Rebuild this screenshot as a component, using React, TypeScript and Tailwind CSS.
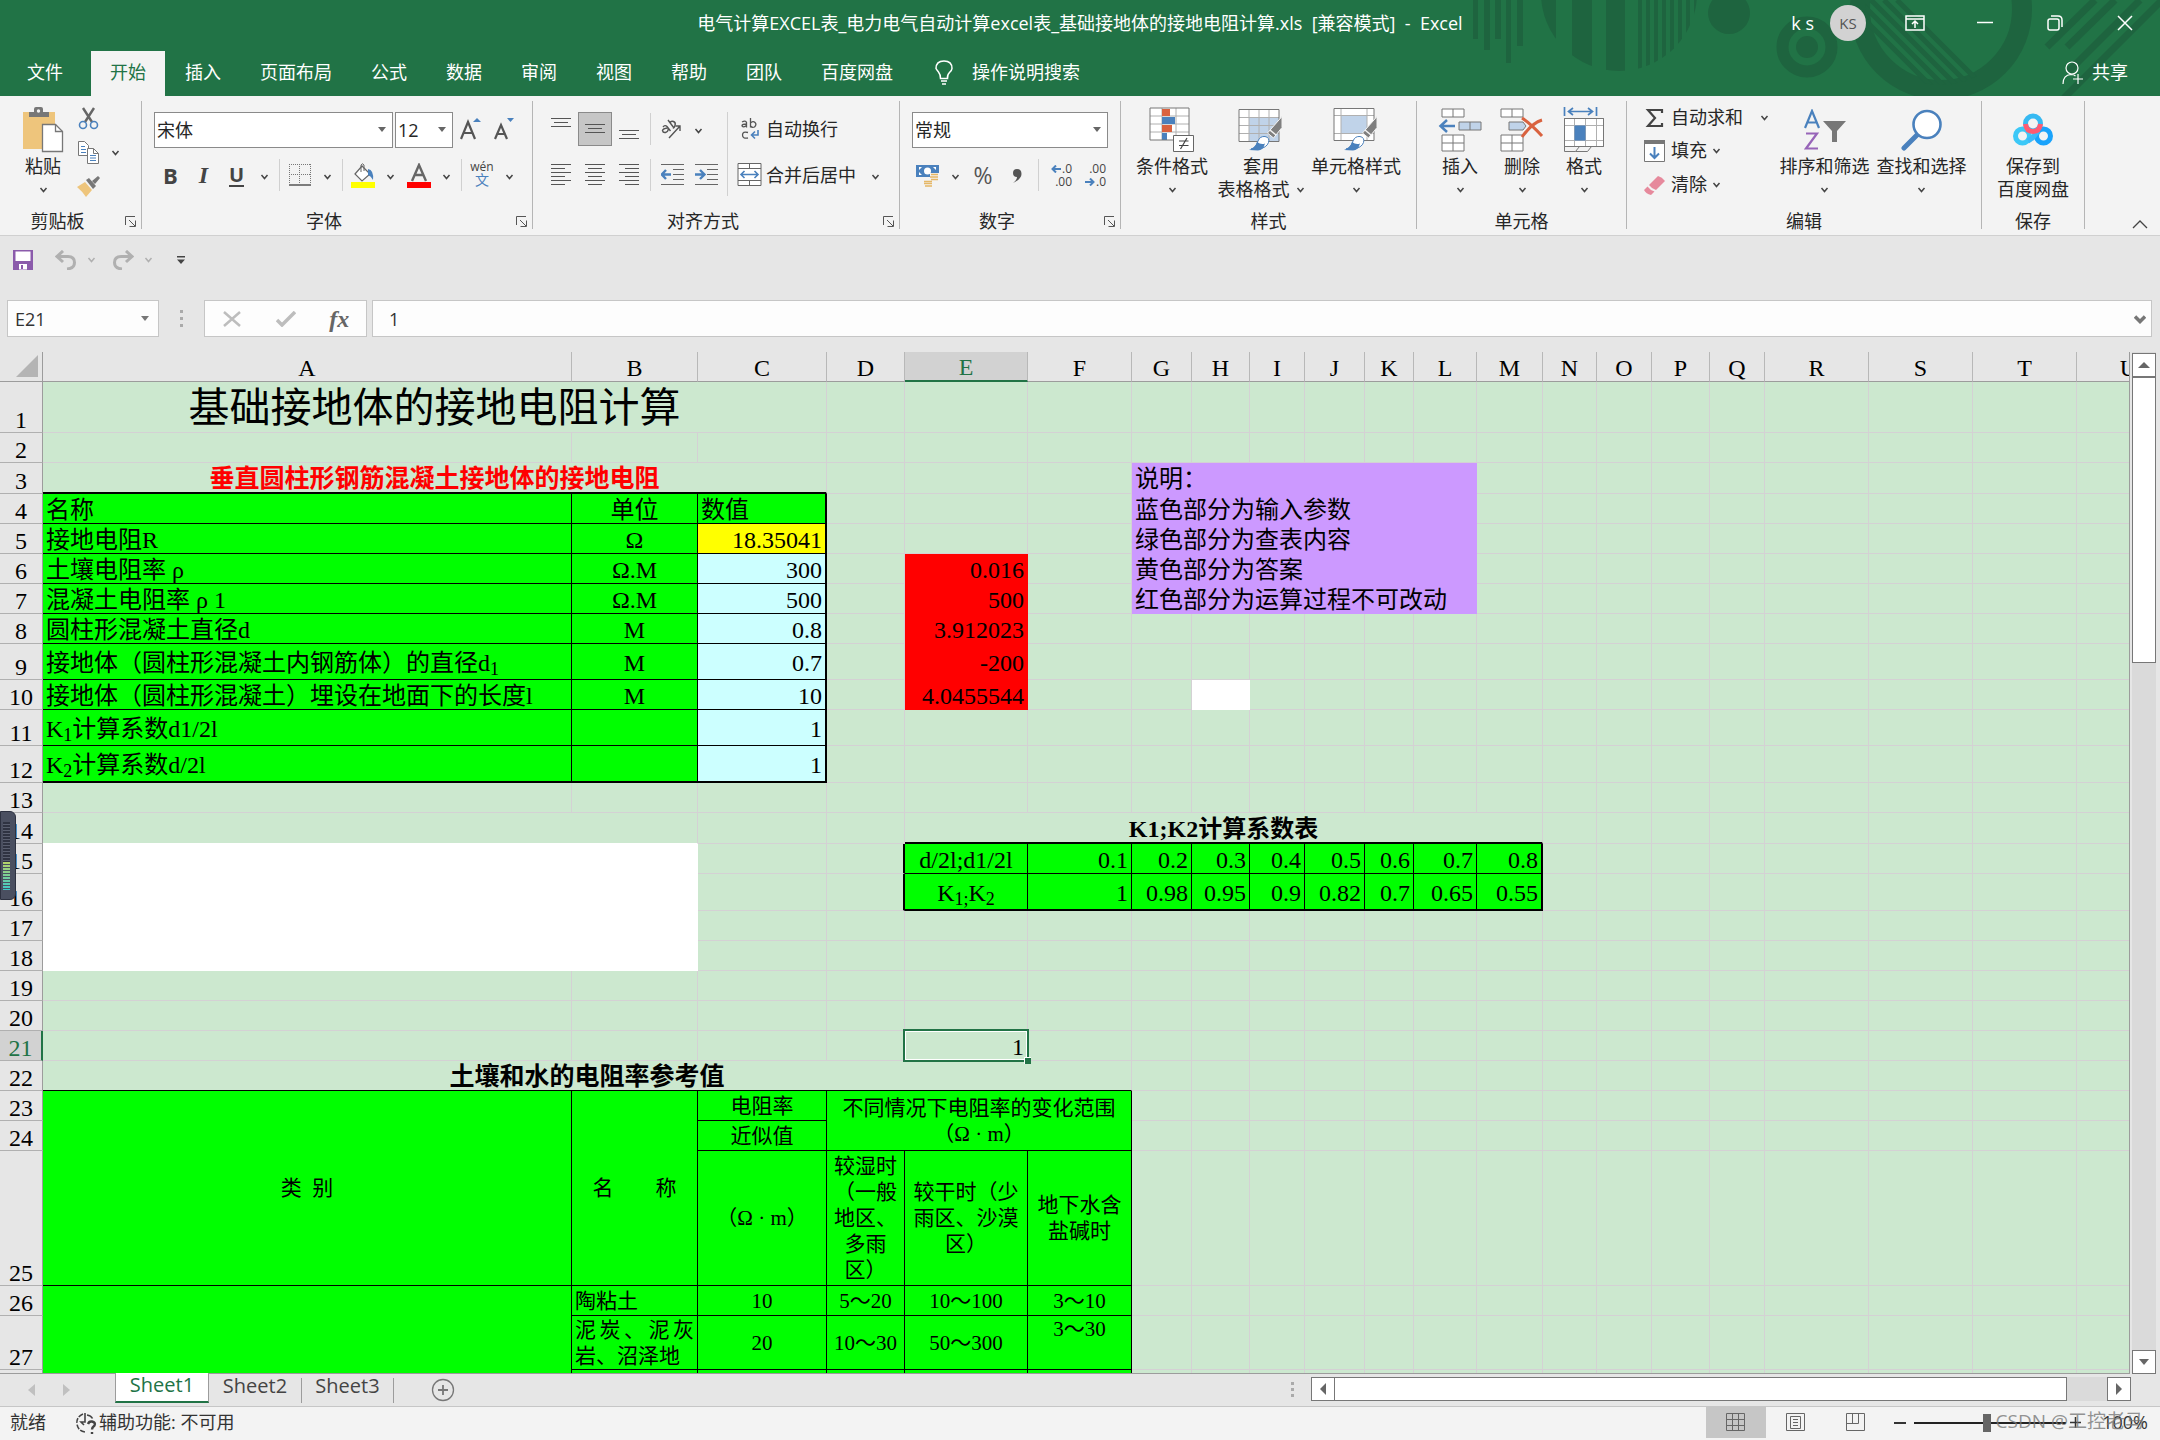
import { useState } from "react";
import type { ReactNode } from "react";

type Cell = {
  v?: ReactNode;
  cls?: string;
  colSpan?: number;
  rowSpan?: number;
};

type Row = {
  n: number;
  h: string;
  cells?: Record<string, Cell>;
};

const COLUMNS = [
  { id: "A", w: "w-[529px]" },
  { id: "B", w: "w-[126px]" },
  { id: "C", w: "w-[129px]" },
  { id: "D", w: "w-[78px]" },
  { id: "E", w: "w-[123px]" },
  { id: "F", w: "w-[104px]" },
  { id: "G", w: "w-[60px]" },
  { id: "H", w: "w-[58px]" },
  { id: "I", w: "w-[55px]" },
  { id: "J", w: "w-[60px]" },
  { id: "K", w: "w-[49px]" },
  { id: "L", w: "w-[63px]" },
  { id: "M", w: "w-[66px]" },
  { id: "N", w: "w-[54px]" },
  { id: "O", w: "w-[55px]" },
  { id: "P", w: "w-[58px]" },
  { id: "Q", w: "w-[55px]" },
  { id: "R", w: "w-[104px]" },
  { id: "S", w: "w-[104px]" },
  { id: "T", w: "w-[104px]" },
  { id: "U", w: "w-[104px]" },
];

const PLAIN = "border-[#d4d1d4]";
const GREEN = "bg-[#00ff00] border-black";
const GREEN_C = "bg-[#00ff00] border-black text-center";
const GREEN_R = "bg-[#00ff00] border-black text-right";
const BLUE = "bg-[#ccffff] border-black border-r-2 text-right";
const RED = "bg-[#ff0000] border-[#ff0000] text-right";
const PURPLE = "bg-[#cc99ff] border-[#cc99ff]";
const WHITE = "bg-white border-white";
const SOIL = "bg-[#00ff00] border-black text-center text-[21px] leading-[26px] whitespace-pre-line";

const note = (v: string): Cell => ({ v, cls: PURPLE, colSpan: 6 });

const ROWS: Row[] = [
  {
    n: 1,
    h: "h-[51px]",
    cells: {
      A: { v: "基础接地体的接地电阻计算", colSpan: 3, cls: `${PLAIN} text-center text-[41px] leading-[48px]` },
    },
  },
  { n: 2, h: "h-[30px]" },
  {
    n: 3,
    h: "h-[31px]",
    cells: {
      A: {
        v: "垂直圆柱形钢筋混凝土接地体的接地电阻",
        colSpan: 3,
        cls: "border-r-[#d4d1d4] border-b-2 border-b-black text-center font-bold text-[25px] text-[#ff0000]",
      },
      G: note("说明："),
    },
  },
  {
    n: 4,
    h: "h-[30px]",
    cells: {
      A: { v: "名称", cls: GREEN },
      B: { v: "单位", cls: GREEN_C },
      C: { v: "数值", cls: `${GREEN} border-r-2` },
      G: note("蓝色部分为输入参数"),
    },
  },
  {
    n: 5,
    h: "h-[30px]",
    cells: {
      A: { v: "接地电阻R", cls: GREEN },
      B: { v: "Ω", cls: GREEN_C },
      C: { v: "18.35041", cls: "bg-[#ffff00] border-black border-r-2 text-right" },
      G: note("绿色部分为查表内容"),
    },
  },
  {
    n: 6,
    h: "h-[30px]",
    cells: {
      A: { v: "土壤电阻率 ρ", cls: GREEN },
      B: { v: "Ω.M", cls: GREEN_C },
      C: { v: "300", cls: BLUE },
      E: { v: "0.016", cls: RED },
      G: note("黄色部分为答案"),
    },
  },
  {
    n: 7,
    h: "h-[30px]",
    cells: {
      A: { v: "混凝土电阻率 ρ 1", cls: GREEN },
      B: { v: "Ω.M", cls: GREEN_C },
      C: { v: "500", cls: BLUE },
      E: { v: "500", cls: RED },
      G: note("红色部分为运算过程不可改动"),
    },
  },
  {
    n: 8,
    h: "h-[30px]",
    cells: {
      A: { v: "圆柱形混凝土直径d", cls: GREEN },
      B: { v: "M", cls: GREEN_C },
      C: { v: "0.8", cls: BLUE },
      E: { v: "3.912023", cls: RED },
    },
  },
  {
    n: 9,
    h: "h-[36px]",
    cells: {
      A: { v: <>接地体（圆柱形混凝土内钢筋体）的直径d<sub>1</sub></>, cls: GREEN },
      B: { v: "M", cls: GREEN_C },
      C: { v: "0.7", cls: BLUE },
      E: { v: "-200", cls: RED },
    },
  },
  {
    n: 10,
    h: "h-[30px]",
    cells: {
      A: { v: "接地体（圆柱形混凝土）埋设在地面下的长度l", cls: GREEN },
      B: { v: "M", cls: GREEN_C },
      C: { v: "10", cls: BLUE },
      E: { v: "4.0455544", cls: RED },
      H: { cls: WHITE },
    },
  },
  {
    n: 11,
    h: "h-[36px]",
    cells: {
      A: { v: <>K<sub>1</sub>计算系数d1/2l</>, cls: GREEN },
      B: { cls: GREEN },
      C: { v: "1", cls: BLUE },
    },
  },
  {
    n: 12,
    h: "h-[37px]",
    cells: {
      A: { v: <>K<sub>2</sub>计算系数d/2l</>, cls: `${GREEN} border-b-2` },
      B: { cls: `${GREEN} border-b-2` },
      C: { v: "1", cls: `${BLUE} border-b-2` },
    },
  },
  { n: 13, h: "h-[30px]" },
  {
    n: 14,
    h: "h-[31px]",
    cells: {
      A: { colSpan: 2, cls: "border-r-[#d4d1d4] border-b-white" },
      E: {
        v: "K1;K2计算系数表",
        colSpan: 9,
        cls: "border-r-[#d4d1d4] border-b-2 border-b-black text-center font-bold",
      },
    },
  },
  {
    n: 15,
    h: "h-[30px]",
    cells: {
      A: { colSpan: 2, rowSpan: 4, cls: WHITE },
      D: { cls: "border-b-[#d4d1d4] border-r-2 border-r-black" },
      E: { v: "d/2l;d1/2l", cls: GREEN_C },
      F: { v: "0.1", cls: GREEN_R },
      G: { v: "0.2", cls: GREEN_R },
      H: { v: "0.3", cls: GREEN_R },
      I: { v: "0.4", cls: GREEN_R },
      J: { v: "0.5", cls: GREEN_R },
      K: { v: "0.6", cls: GREEN_R },
      L: { v: "0.7", cls: GREEN_R },
      M: { v: "0.8", cls: `${GREEN_R} border-r-2` },
    },
  },
  {
    n: 16,
    h: "h-[37px]",
    cells: {
      D: { cls: "border-b-[#d4d1d4] border-r-2 border-r-black" },
      E: { v: <>K<sub>1;</sub>K<sub>2</sub></>, cls: `${GREEN_C} border-b-2` },
      F: { v: "1", cls: `${GREEN_R} border-b-2` },
      G: { v: "0.98", cls: `${GREEN_R} border-b-2` },
      H: { v: "0.95", cls: `${GREEN_R} border-b-2` },
      I: { v: "0.9", cls: `${GREEN_R} border-b-2` },
      J: { v: "0.82", cls: `${GREEN_R} border-b-2` },
      K: { v: "0.7", cls: `${GREEN_R} border-b-2` },
      L: { v: "0.65", cls: `${GREEN_R} border-b-2` },
      M: { v: "0.55", cls: `${GREEN_R} border-b-2 border-r-2` },
    },
  },
  { n: 17, h: "h-[30px]" },
  { n: 18, h: "h-[30px]" },
  { n: 19, h: "h-[30px]" },
  { n: 20, h: "h-[30px]" },
  {
    n: 21,
    h: "h-[30px]",
    cells: {
      E: {
        v: (
          <>
            1
            <span className="absolute -inset-[2px] border-2 border-[#217346] outline-1 -outline-offset-3 outline-white" />
            <span className="absolute -right-1 -bottom-1 size-[7px] border-t border-l border-white bg-[#217346]" />
          </>
        ),
        cls: `${PLAIN} relative text-right`,
      },
    },
  },
  {
    n: 22,
    h: "h-[30px]",
    cells: {
      A: {
        v: "土壤和水的电阻率参考值",
        colSpan: 6,
        cls: "border-r-[#d4d1d4] border-b-black text-center font-bold text-[25px]",
      },
    },
  },
  {
    n: 23,
    h: "h-[30px]",
    cells: {
      A: { v: "类\u00a0\u00a0别", rowSpan: 3, cls: SOIL },
      B: { v: "名　　称", rowSpan: 3, cls: SOIL },
      C: { v: "电阻率", cls: SOIL },
      D: { v: "不同情况下电阻率的变化范围\n（Ω · m）", colSpan: 3, rowSpan: 2, cls: SOIL },
    },
  },
  { n: 24, h: "h-[30px]", cells: { C: { v: "近似值", cls: SOIL } } },
  {
    n: 25,
    h: "h-[135px]",
    cells: {
      C: { v: "（Ω · m）", cls: SOIL },
      D: { v: "较湿时\n（一般\n地区、\n多雨\n区）", cls: SOIL },
      E: { v: "较干时（少\n雨区、沙漠\n区）", cls: SOIL },
      F: { v: "地下水含\n盐碱时", cls: SOIL },
    },
  },
  {
    n: 26,
    h: "h-[30px]",
    cells: {
      A: { rowSpan: 3, cls: GREEN },
      B: { v: "陶粘土", cls: "bg-[#00ff00] border-black text-[21px]" },
      C: { v: "10", cls: SOIL },
      D: { v: "5～20", cls: SOIL },
      E: { v: "10～100", cls: SOIL },
      F: { v: "3～10", cls: SOIL },
    },
  },
  {
    n: 27,
    h: "h-[54px]",
    cells: {
      B: { v: "泥炭、泥灰岩、沼泽地", cls: "bg-[#00ff00] border-black text-justify text-[21px] leading-[26px]" },
      C: { v: "20", cls: SOIL },
      D: { v: "10～30", cls: SOIL },
      E: { v: "50～300", cls: SOIL },
      F: { v: "3～30", cls: `${SOIL} align-top` },
    },
  },
  {
    n: 28,
    h: "h-[30px]",
    cells: { B: { cls: GREEN }, C: { cls: GREEN }, D: { cls: GREEN }, E: { cls: GREEN }, F: { cls: GREEN } },
  },
];

// cells hidden under a merged neighbour
const covered = new Set<string>();
ROWS.forEach((row, r) => {
  Object.entries(row.cells ?? {}).forEach(([id, cell]) => {
    const c = COLUMNS.findIndex((col) => col.id === id);
    for (let i = 0; i < (cell.rowSpan ?? 1); i++) {
      for (let j = 0; j < (cell.colSpan ?? 1); j++) {
        if (i || j) covered.add(`${r + i}:${c + j}`);
      }
    }
  });
});

const Chevron = ({ color = "#444" }: { color?: string }) => (
  <svg width="9" height="6" viewBox="0 0 9 6" fill="none" stroke={color} strokeWidth="1.500">
    <path d="M1.500 1l3 3.500 3-3.500" />
  </svg>
);

const DropButton = ({ label }: { label: string }) => (
  <button aria-label={label} className="flex h-8 w-[22px] items-center justify-center pt-1">
    <Chevron />
  </button>
);

const IconButton = ({
  label,
  w = "w-8",
  active,
  children,
}: {
  label: string;
  w?: string;
  active?: boolean;
  children: ReactNode;
}) => (
  <button
    aria-label={label}
    className={`flex h-[34px] items-center justify-center ${w} ${
      active ? "border border-[#8a8a8a] bg-[#c6c6c6]" : ""
    }`}
  >
    {children}
  </button>
);

const Sep = () => <span className="mx-1 h-8 w-px shrink-0 bg-[#d0d0d0]" />;

const Group = ({
  name,
  w,
  launcher,
  children,
}: {
  name: string;
  w: string;
  launcher?: boolean;
  children: ReactNode;
}) => (
  <section className={`flex h-[128px] shrink-0 flex-col border-r border-[#b5b5b5] ${w}`}>
    <div className="h-[112px]">{children}</div>
    <div className={`flex h-4 items-center ${launcher ? "pr-[5px]" : ""}`}>
      <span className={`flex-1 text-center leading-4 ${launcher ? "pr-[10px]" : ""}`}>{name}</span>
      {launcher && (
        <button aria-label={`${name}设置`}>
          <svg width="11" height="11" viewBox="0 0 11 11" fill="none" stroke="#555" strokeWidth="1">
            <path d="M.5 9V.5H10M4 4l6 6M10.500 4.500v6h-6" />
          </svg>
        </button>
      )}
    </div>
  </section>
);

const BigButton = ({
  icon,
  lines,
  w,
  inlineDrop,
  drop = true,
}: {
  icon: ReactNode;
  lines: string[];
  w: string;
  inlineDrop?: boolean;
  drop?: boolean;
}) => (
  <button className={`flex shrink-0 flex-col items-center pt-1 leading-[23px] whitespace-nowrap ${w}`}>
    <span className="flex h-[50px] items-center">{icon}</span>
    <span>{lines[0]}</span>
    <span className="flex h-[23px] items-center gap-[6px]">
      {lines[1]}
      {(drop && !lines[1]) || inlineDrop ? <Chevron /> : null}
    </span>
  </button>
);

const SelectBox = ({ label, value, w }: { label: string; value: string; w: string }) => (
  <div className={`relative h-9 ${w}`}>
    <select
      aria-label={label}
      className="h-9 w-full appearance-none border border-[#8a8a8a] bg-white pl-[2px] text-[18px] text-[#262626]"
    >
      <option>{value}</option>
    </select>
    <svg className="pointer-events-none absolute top-[15px] right-[7px]" width="8" height="5" viewBox="0 0 8 5">
      <path d="M0 0h8L4 5z" fill="#666" />
    </svg>
  </div>
);

const Lines = ({ rows }: { rows: [number, number][] }) => (
  <svg width="22" height="24" viewBox="0 0 22 24" stroke="#555" strokeWidth="1">
    {rows.map(([x, len], i) => (
      <path key={i} d={`M${x} ${i * 4 + 1.5}h${len}`} />
    ))}
  </svg>
);

const PasteIcon = () => (
  <svg width="42" height="46" viewBox="0 0 42 46">
    <path d="M1 5h32v37H1z" fill="#eec57c" />
    <path d="M7 5h5V2q0-2 2-2h5q2 0 2 2v3h6v5H7z" fill="#777" />
    <circle cx="16.500" cy="4" r="1.700" fill="#f3f3f3" />
    <path d="M20.500 17.500h13l7 7v20h-20z" fill="#fff" stroke="#777" strokeWidth="1.300" />
    <path d="M33.500 17.500v7h7" fill="none" stroke="#777" strokeWidth="1.300" />
  </svg>
);

const CutIcon = () => (
  <svg width="21" height="23" viewBox="0 0 21 23" fill="none">
    <path d="M5 1l9 14M16 1L7 15" stroke="#666" strokeWidth="2.400" />
    <circle cx="5" cy="18" r="3.500" stroke="#4a81bd" strokeWidth="1.600" />
    <circle cx="16" cy="18" r="3.500" stroke="#4a81bd" strokeWidth="1.600" />
  </svg>
);

const CopyIcon = () => (
  <svg width="21" height="23" viewBox="0 0 21 23" fill="#fff" stroke="#777">
    <path d="M.5.5h6l4 4v10H.5z" />
    <path d="M3 5.500h4M3 8.500h5M3 11.500h5" stroke="#4a81bd" />
    <path d="M9.500 7.500h6l5 5v10h-11z" />
    <path d="M15.500 7.500v5h5" fill="none" />
    <path d="M12 14.500h6M12 17h6M12 19.500h6" stroke="#4a81bd" />
  </svg>
);

const PainterIcon = () => (
  <svg width="23" height="21" viewBox="0 0 23 21">
    <path d="M0 11l8-5 7 8-6 7q-3-5-9-10z" fill="#eec57c" />
    <path d="M9 4l3-2 7 8-3 3zM15 5l6-5 2 2-5 6z" fill="#777" />
  </svg>
);

const BordersIcon = () => (
  <svg width="22" height="22" viewBox="0 0 22 22" fill="none" stroke="#777">
    <path d="M.5 0v20M10.500 0v20M21.500 0v20M0 .5h22M0 10.500h22" strokeDasharray="1 1" />
    <path d="M0 21h22" stroke="#555" strokeWidth="1.500" />
  </svg>
);

const FillIcon = () => (
  <svg width="24" height="25" viewBox="0 0 24 25" fill="none">
    <path d="M4 11l7-8 8 8-8 7z" fill="#fff" stroke="#666" strokeWidth="1.200" />
    <path d="M10 9V2q1.500-2.500 3 0v6" stroke="#666" />
    <path d="M17 6q6 1 5 11-2-4-5-5z" fill="#4a81bd" />
    <path d="M0 19h24v6H0z" fill="#ffff00" />
  </svg>
);

const FontColorIcon = () => (
  <svg width="24" height="25" viewBox="0 0 24 25">
    <path d="M5 18L12 2l7 16M7.500 12h9" fill="none" stroke="#666" strokeWidth="2.400" />
    <path d="M0 19h24v6H0z" fill="#ff0000" />
  </svg>
);

const OrientationIcon = () => (
  <svg width="21" height="20" viewBox="0 0 21 20" fill="none" stroke="#555" strokeWidth="1.400">
    <path d="M8 19L19 7M14.500 7H19v5" />
    <path d="M2 8q2-2.500 4-.5l3.500 4.500M7.500 9.500q-.500 3.500-3 4T1.500 11.500Q2 9.500 6.500 9M7 1l6 8M9 4q1-2.500 3.500-1.500t1.500 4-2 2.500" />
  </svg>
);

const IndentIcon = ({ right }: { right?: boolean }) => (
  <svg width="23" height="22" viewBox="0 0 23 22" fill="none" stroke="#666">
    <path d="M0 .5h23M12 5.500h11M12 10.500h11M12 15.500h11M0 20.500h23" />
    <path
      d={right ? "M0 10.500h9M5 6l4.500 4.500L5 15" : "M10 10.500H1M5 6L.8 10.500 5 15"}
      stroke="#4a81bd"
      strokeWidth="2.400"
    />
  </svg>
);

const WrapIcon = () => (
  <svg width="22" height="22" viewBox="0 0 22 22" fill="none" stroke="#555" strokeWidth="1.300">
    <path d="M2 4q3.500-2 4.500.5V9.500M6.500 6Q2 6 2 7.800 3.500 10 6.500 7.500M10.500 0v9.500M10.500 5Q13 2.500 15 4.500t-.5 4.500Q12 10 10.500 8M8 14.500Q2.500 13 2.500 17T8 20" />
    <path d="M18 12v5h-6M15 13.500L11.500 17l3.500 3.500" stroke="#4a81bd" strokeWidth="1.600" />
  </svg>
);

const MergeIcon = () => (
  <svg width="25" height="24" viewBox="0 0 25 24" fill="#fff" stroke="#666">
    <path d="M1 .5h23v22H1zM1 5.500h23M1 17.500h23M12.500.5v5M12.500 17.500v5" />
    <path d="M4 11.500h17M7.500 8L4 11.500 7.500 15M17.500 8l3.500 3.500-3.500 3.500" fill="none" stroke="#4a81bd" strokeWidth="1.600" />
  </svg>
);

const MoneyIcon = () => (
  <svg width="24" height="23" viewBox="0 0 24 23">
    <path d="M0 1h23v12H0z" fill="#4a81bd" />
    <path d="M3 3h3L3 6zM20 3h-3l3 3zM3 11h3L3 8z" fill="#fff" />
    <circle cx="11.500" cy="7" r="3.500" fill="#fff" />
    <path d="M14 9h9v9h-6v4H8v-6h6z" fill="#f3f3f3" />
    <path d="M15 10.500h7M14 13h8M15 15.500h7M8 17.500h8M8 19.500h8M9 22h7" stroke="#e5b766" strokeWidth="1.700" />
  </svg>
);

const DecimalIcon = ({ fewer }: { fewer?: boolean }) => (
  <span className="flex w-6 flex-col items-end text-[12px] leading-[13px] text-[#444]">
    {fewer ? (
      <>
        <span>.00</span>
        <span className="flex items-center gap-px">
          <svg width="10" height="8" viewBox="0 0 10 8" fill="none" stroke="#4a81bd" strokeWidth="2">
            <path d="M0 4h8M5 .5L8.500 4 5 7.500" />
          </svg>
          .0
        </span>
      </>
    ) : (
      <>
        <span className="flex items-center gap-px">
          <svg width="10" height="8" viewBox="0 0 10 8" fill="none" stroke="#4a81bd" strokeWidth="2">
            <path d="M10 4H2M5 .5L1.500 4 5 7.500" />
          </svg>
          .0
        </span>
        <span>.00</span>
      </>
    )}
  </span>
);

const Brush = () => (
  <>
    <path d="M44 9.500v11L35.500 31l-6-5z" fill="#7f7f7f" stroke="#f3f3f3" />
    <path d="M32 23l6 5" stroke="#f3f3f3" strokeWidth="1.500" />
    <path d="M13 42q5-1 7-8 2-5 7-4.500 5 1 3.500 6T20 42.500z" fill="#fff" stroke="#4a81bd" />
    <path d="M11 43q6-2 8-8 4 3 8 1.500Q25 43.500 20 43.500z" fill="#4a81bd" />
  </>
);

const ConditionalIcon = () => (
  <svg width="46" height="46" viewBox="0 0 46 46">
    <path d="M1 1h39v32H1z" fill="#fff" />
    <path d="M1 9h39M1 17h39M1 25h39M13 1v32M27 1v32" stroke="#b0b0b0" />
    <path d="M13 2h8v7h-8zM13 18h10v7H13z" fill="#d9623f" />
    <path d="M13 10h13v7H13zM13 26h5v7h-5z" fill="#4a81bd" />
    <path d="M1 1h39v32H1z" fill="none" stroke="#777" />
    <path d="M24.500 28.500h20v16h-20z" fill="#fff" stroke="#666" />
    <path d="M30 34h9.500M30 38.500h9.500M38 31l-6.500 11" stroke="#444" strokeWidth="1.200" />
  </svg>
);

const TableStyleIcon = () => (
  <svg width="46" height="46" viewBox="0 0 46 46">
    <path d="M1 2.500h40v32H1z" fill="#fff" />
    <path d="M11 10.500h30v24H11z" fill="#c0d3e9" />
    <path d="M1 10.500h40M1 18.500h40M1 26.500h40M11 2.500v32M21 2.500v32M31 2.500v32" stroke="#b0b0b0" />
    <path d="M1 2.500h40v32H1z" fill="none" stroke="#777" />
    <Brush />
  </svg>
);

const CellStyleIcon = () => (
  <svg width="46" height="46" viewBox="0 0 46 46">
    <path d="M1 1.500h40v32H1z" fill="#fff" />
    <path d="M8 8.500h26v18H8z" fill="#c0d3e9" />
    <path d="M1 8.500h40M1 26.500h40M8 1.500v32M34 1.500v32" stroke="#b0b0b0" />
    <path d="M1 1.500h40v32H1z" fill="none" stroke="#777" />
    <Brush />
  </svg>
);

const InsertIcon = () => (
  <svg width="44" height="44" viewBox="0 0 44 44" fill="#fff" stroke="#777">
    <path d="M4 1h22v8H4zM15 1v8M4 27h22v16H4zM15 27v16M4 35h22" />
    <path d="M21 14h22v8H21zM32 14v8" fill="#c0d3e9" />
    <path d="M17 18H3M9 12l-6.500 6L9 24" fill="none" stroke="#4a81bd" strokeWidth="2.500" />
  </svg>
);

const DeleteIcon = () => (
  <svg width="44" height="44" viewBox="0 0 44 44" fill="#fff" stroke="#777">
    <path d="M1 1h22v8H1zM12 1v8M1 27h22v16H1zM12 27v16M1 35h22" />
    <path d="M9 14h14l3 4-3 4H9z" fill="#c0d3e9" />
    <path d="M22 10q9 6 20 18M42 12q-10 3-20 17" fill="none" stroke="#d9623f" strokeWidth="3" />
  </svg>
);

const FormatIcon = () => (
  <svg width="42" height="46" viewBox="0 0 42 46" fill="#fff" stroke="#777">
    <path d="M1.500 11.500h39v28h-39z" />
    <path d="M1.500 18.500h39M1.500 33.500h39M11.500 11.500v28M22.500 11.500v28M33.500 11.500v28" stroke="#b0b0b0" />
    <path d="M11.500 18.500h11v15h-11z" fill="#4a81bd" stroke="none" />
    <path d="M1.500 11.500h39v28h-39zM1.500 39.500v5h11l4-5M12.500 44.500h12l4-5" fill="none" />
    <path d="M1.500 0v9M33.500 0v9M6 4.500h23M10 1L5.500 4.500 10 8M25 1l4.500 3.500L25 8" fill="none" stroke="#4a81bd" strokeWidth="1.700" />
  </svg>
);

const SortIcon = () => (
  <svg width="42" height="42" viewBox="0 0 42 42" fill="none">
    <path d="M1 19L8 2l7 17M3.500 13.500h9" stroke="#4a81bd" strokeWidth="2.200" />
    <path d="M2 24.500h11L2 39.500h12" stroke="#9764b8" strokeWidth="2.200" />
    <path d="M19 12h23l-9 10v11h-5V22z" fill="#777" />
  </svg>
);

const FindIcon = () => (
  <svg width="42" height="42" viewBox="0 0 42 42">
    <path d="M17 25L3 39" stroke="#4a81bd" strokeWidth="5" strokeLinecap="round" />
    <circle cx="26" cy="15.500" r="13.500" fill="#fff" stroke="#4a81bd" strokeWidth="2.600" />
  </svg>
);

const CloudIcon = () => (
  <svg width="40" height="34" viewBox="0 0 40 34" fill="none" strokeWidth="5">
    <circle cx="20" cy="10.500" r="7.500" stroke="#36b9f2" />
    <circle cx="9.500" cy="23" r="7" stroke="#3cc8f7" />
    <circle cx="30.500" cy="23" r="7" stroke="#1aa3fb" />
    <path d="M15 28q4-2 6-5t5-5" stroke="#3cb9fa" />
    <path d="M12.500 11q1 7.500 7.500 7.500t7.500-7.500" stroke="#ff5a72" />
  </svg>
);

const HeaderArt = () => (
  <svg
    className="pointer-events-none absolute top-0 right-0"
    width="720"
    height="96"
    viewBox="0 0 720 96"
    fill="#1e643f"
  >
    <defs>
      <clipPath id="disc">
        <circle cx="179" cy="-7" r="78" />
      </clipPath>
      <clipPath id="ring">
        <circle cx="501" cy="9" r="76" />
      </clipPath>
    </defs>
    <path d="M33 0h5v39h-5zM44 0h6v50h-6zM55 0h6v39h-6zM66 0h5v63h-5zM77 0h6v46h-6z" />
    <path
      clipPath="url(#disc)"
      d="M101 0h15v90h-15zM132 0h20v90h-20zM166 0h19v90h-19zM198 0h4v90h-4zM206 0h4v90h-4zM214 0h4v90h-4zM222 0h4v90h-4zM230 0h4v90h-4zM238 0h4v90h-4zM246 0h4v90h-4zM254 0h3v90h-3z"
    />
    <circle cx="289" cy="13" r="21" />
    <circle cx="367" cy="47" r="24.500" fill="none" stroke="#1e643f" strokeWidth="12" />
    <circle cx="367" cy="47" r="11" />
    <circle cx="501" cy="9" r="81" fill="none" stroke="#1e643f" strokeWidth="20" />
    <g clipPath="url(#ring)" stroke="#1e643f" strokeWidth="5">
      <path d="M405 0l110 110M418 0l110 110M431 0l110 110M444 0l110 110M457 0l110 110" />
    </g>
    <g stroke="#1e643f" strokeWidth="7">
      <path d="M655 0l-48 47M675 0l-48 47M700 0l-72 72M722 0l-98 98" />
    </g>
  </svg>
);

const TitleBar = () => (
  <div className="relative grid h-[51px] grid-cols-[1fr_auto_1fr] items-start text-white">
    <span />
    <h1 className="pt-[11px] text-[18px] leading-6 whitespace-pre">
      电气计算EXCEL表_电力电气自动计算excel表_基础接地体的接地电阻计算.xls  [兼容模式]  -  Excel
    </h1>
    <div className="flex h-[46px] items-center justify-end">
      <span className="mr-4">k s</span>
      <span className="mr-[14px] flex size-9 items-center justify-center rounded-full bg-[#d2d2d2] text-[15px] text-[#555]">
        KS
      </span>
      <button aria-label="功能区显示选项" className="flex w-[70px] justify-center">
        <svg width="20" height="16" viewBox="0 0 20 16" fill="none" stroke="#fff" strokeWidth="1.500">
          <path d="M1 1h18v14H1zM1 4h18M10 13V6.500M7 9l3-3 3 3" />
        </svg>
      </button>
      <button aria-label="最小化" className="flex w-[70px] justify-center">
        <svg width="16" height="16" viewBox="0 0 16 16" stroke="#fff" strokeWidth="1.500">
          <path d="M0 7.500h16" />
        </svg>
      </button>
      <button aria-label="还原" className="flex w-[70px] justify-center">
        <svg width="16" height="16" viewBox="0 0 16 16" fill="none" stroke="#fff" strokeWidth="1.500">
          <rect x="1" y="4" width="11" height="11" rx="2" />
          <path d="M4 1h7q4 0 4 4v7" />
        </svg>
      </button>
      <button aria-label="关闭" className="flex w-[70px] justify-center">
        <svg width="16" height="16" viewBox="0 0 16 16" stroke="#fff" strokeWidth="1.500">
          <path d="M1 1l14 14M15 1L1 15" />
        </svg>
      </button>
    </div>
  </div>
);

const TABS = ["插入", "页面布局", "公式", "数据", "审阅", "视图", "帮助", "团队", "百度网盘"];

const TabBar = () => (
  <nav className="relative flex h-[45px] items-stretch gap-px text-white">
    <button className="w-[90px] pb-[2px]">文件</button>
    <button className="bg-[#f3f3f3] px-[19px] pb-[2px] text-[#217346]">开始</button>
    {TABS.map((tab) => (
      <button key={tab} className="px-[19px] pb-[2px]">
        {tab}
      </button>
    ))}
    <button className="flex items-center gap-[19px] pb-[2px] pl-[22px]">
      <svg width="18" height="25" viewBox="0 0 18 25" fill="none" stroke="#fff" strokeWidth="1.500">
        <path d="M5.500 18.500q0-4-2-6.500T1 8.500Q1 1 9 1t8 7.500q0 1.500-2.500 4t-2 6zM6 21h6M7 24h4" />
      </svg>
      操作说明搜索
    </button>
    <button className="ml-auto flex items-center gap-2 pr-8 pb-[2px]">
      <svg width="22" height="24" viewBox="0 0 22 24" fill="none" stroke="#fff" strokeWidth="1.200">
        <circle cx="10" cy="7" r="6" />
        <path d="M1 23q0-9 8-9.500 3 0 4.500 1.500M16 13v10M11 18h10" />
      </svg>
      共享
    </button>
  </nav>
);

const Ribbon = () => (
  <div className="flex h-[140px] shrink-0 border-b border-[#d0d0d0] bg-[#f3f3f3] pt-[5px] text-[#262626]">
    <Group name="剪贴板" w="w-[142px]" launcher>
      <div className="flex pl-[14px]">
        <BigButton icon={<PasteIcon />} lines={["粘贴"]} w="w-[58px]" />
        <div className="flex flex-col">
          <IconButton label="剪切"><CutIcon /></IconButton>
          <div className="flex">
            <IconButton label="复制"><CopyIcon /></IconButton>
            <DropButton label="复制选项" />
          </div>
          <IconButton label="格式刷"><PainterIcon /></IconButton>
        </div>
      </div>
    </Group>

    <Group name="字体" w="w-[391px]" launcher>
      <div className="flex flex-col gap-[10px] pt-[11px] pl-3">
        <div className="flex gap-[2px]">
          <SelectBox label="字体" value="宋体" w="w-[239px]" />
          <SelectBox label="字号" value="12" w="w-[58px]" />
          <IconButton label="增大字号">
            <svg width="22" height="24" viewBox="0 0 22 24">
              <path d="M1 22L8 5l7 17M3.500 16h9" fill="none" stroke="#555" strokeWidth="2.200" />
              <path d="M13 5l4-4 4 4z" fill="#4a81bd" />
            </svg>
          </IconButton>
          <IconButton label="减小字号">
            <svg width="22" height="24" viewBox="0 0 22 24">
              <path d="M1 22L7 8l6 14M3 17h8" fill="none" stroke="#555" strokeWidth="2.200" />
              <path d="M13 1h7l-3.500 4z" fill="#4a81bd" />
            </svg>
          </IconButton>
        </div>
        <div className="flex items-center">
          <IconButton label="加粗" w="w-[33px]"><span className="text-[22px] font-bold text-[#444]">B</span></IconButton>
          <IconButton label="倾斜" w="w-[33px]">
            <span className="font-['Liberation_Serif',serif] text-[24px] font-bold text-[#444] italic">I</span>
          </IconButton>
          <IconButton label="下划线" w="w-[33px]">
            <span className="border-b-2 border-[#444] text-[20px] leading-[21px] font-bold text-[#444]">U</span>
          </IconButton>
          <DropButton label="下划线选项" />
          <Sep />
          <IconButton label="边框"><BordersIcon /></IconButton>
          <DropButton label="边框选项" />
          <Sep />
          <IconButton label="填充颜色"><FillIcon /></IconButton>
          <DropButton label="填充颜色选项" />
          <span className="w-[2px]" />
          <IconButton label="字体颜色"><FontColorIcon /></IconButton>
          <DropButton label="字体颜色选项" />
          <Sep />
          <IconButton label="拼音">
            <span className="flex flex-col items-center text-[12px] leading-[10px] text-[#444]">
              wén
              <span className="text-[14px] leading-4 text-[#4a81bd]">文</span>
            </span>
          </IconButton>
          <DropButton label="拼音选项" />
        </div>
      </div>
    </Group>

    <Group name="对齐方式" w="w-[367px]" launcher>
      <div className="flex pt-[11px] pl-[11px]">
        <div className="flex flex-col gap-3">
          <div className="flex items-center">
            <IconButton label="顶端对齐" w="w-[34px]"><Lines rows={[[1, 20], [4, 14], [1, 20]]} /></IconButton>
            <IconButton label="垂直居中" w="w-[34px]" active>
              <svg width="22" height="24" viewBox="0 0 22 24" stroke="#555">
                <path d="M1 7.500h20M4 11.500h14M1 15.500h20" />
              </svg>
            </IconButton>
            <IconButton label="底端对齐" w="w-[34px]">
              <svg width="22" height="24" viewBox="0 0 22 24" stroke="#555">
                <path d="M1 13.500h20M4 17.500h14M1 21.500h20" />
              </svg>
            </IconButton>
            <Sep />
            <IconButton label="方向"><OrientationIcon /></IconButton>
            <DropButton label="方向选项" />
          </div>
          <div className="flex items-center">
            <IconButton label="左对齐" w="w-[34px]"><Lines rows={[[1, 20], [1, 14], [1, 20], [1, 14], [1, 20], [1, 14]]} /></IconButton>
            <IconButton label="居中" w="w-[34px]"><Lines rows={[[1, 20], [4, 14], [1, 20], [4, 14], [1, 20], [4, 14]]} /></IconButton>
            <IconButton label="右对齐" w="w-[34px]"><Lines rows={[[1, 20], [7, 14], [1, 20], [7, 14], [1, 20], [7, 14]]} /></IconButton>
            <Sep />
            <IconButton label="减少缩进量" w="w-[34px]"><IndentIcon /></IconButton>
            <IconButton label="增加缩进量" w="w-[34px]"><IndentIcon right /></IconButton>
          </div>
        </div>
        <div className="ml-1 h-[84px] w-px bg-[#d0d0d0]" />
        <div className="flex flex-col gap-3 pl-[9px]">
          <button className="flex h-[34px] items-center gap-1 pl-[3px]"><WrapIcon />自动换行</button>
          <div className="flex items-center">
            <button className="flex h-[34px] items-center gap-1"><MergeIcon />合并后居中</button>
            <span className="w-2" />
            <DropButton label="合并选项" />
          </div>
        </div>
      </div>
    </Group>

    <Group name="数字" w="w-[221px]" launcher>
      <div className="flex flex-col gap-[10px] pt-[11px] pl-3">
        <SelectBox label="数字格式" value="常规" w="w-[196px]" />
        <div className="flex items-center">
          <IconButton label="会计数字格式"><MoneyIcon /></IconButton>
          <DropButton label="货币选项" />
          <IconButton label="百分比样式" w="w-[34px]"><span className="text-[23px] text-[#555]">%</span></IconButton>
          <IconButton label="千位分隔样式" w="w-[34px]">
            <svg width="10" height="15" viewBox="0 0 10 15" fill="#555">
              <path d="M1 15q4-3 4-6-4 0-4-4t4-4q4.500 0 4.500 5T1 15z" />
            </svg>
          </IconButton>
          <Sep />
          <IconButton label="增加小数位数" w="w-[34px]"><DecimalIcon /></IconButton>
          <IconButton label="减少小数位数" w="w-[34px]"><DecimalIcon fewer /></IconButton>
        </div>
      </div>
    </Group>

    <Group name="样式" w="w-[296px]">
      <div className="flex pl-[6px]">
        <BigButton icon={<ConditionalIcon />} lines={["条件格式"]} w="w-[90px]" />
        <BigButton icon={<TableStyleIcon />} lines={["套用", "表格格式"]} w="w-[88px]" inlineDrop />
        <BigButton icon={<CellStyleIcon />} lines={["单元格样式"]} w="w-[102px]" />
      </div>
    </Group>

    <Group name="单元格" w="w-[210px]">
      <div className="flex pl-3">
        <BigButton icon={<InsertIcon />} lines={["插入"]} w="w-[62px]" />
        <BigButton icon={<DeleteIcon />} lines={["删除"]} w="w-[62px]" />
        <BigButton icon={<FormatIcon />} lines={["格式"]} w="w-[62px]" />
      </div>
    </Group>

    <Group name="编辑" w="w-[355px]">
      <div className="flex pl-[15px]">
        <div className="flex w-[134px] flex-col">
          <button className="flex h-[33px] items-center gap-[5px]">
            <svg width="24" height="20" viewBox="0 0 24 20" fill="none" stroke="#444" strokeWidth="2.200">
              <path d="M20 5V2H6l7 8-7 8h14v-3" />
            </svg>
            自动求和
            <span className="pl-3"><Chevron /></span>
          </button>
          <button className="flex h-[33px] items-center gap-[5px]">
            <svg width="24" height="24" viewBox="0 0 24 24">
              <path d="M2.500 1.500h20v21h-20z" fill="#fff" stroke="#777" />
              <path d="M2 1h21v4H2z" fill="#777" />
              <path d="M12.500 8v11M8 14.500l4.500 4.500 4.500-4.500" fill="none" stroke="#4a81bd" strokeWidth="2" />
            </svg>
            填充
            <Chevron />
          </button>
          <button className="flex h-[35px] items-center gap-[5px]">
            <svg width="24" height="20" viewBox="0 0 24 20">
              <path d="M7 10L16 1q4 1 7 5l-9 9q-4-1-7-5z" fill="#e6899c" />
              <path d="M5.500 11.500q3 4 7 5L9 20q-5-1-7-5z" fill="#e6899c" />
            </svg>
            清除
            <Chevron />
          </button>
        </div>
        <BigButton icon={<SortIcon />} lines={["排序和筛选"]} w="w-[97px]" />
        <BigButton icon={<FindIcon />} lines={["查找和选择"]} w="w-[97px]" />
      </div>
    </Group>

    <Group name="保存" w="w-[103px]">
      <BigButton icon={<CloudIcon />} lines={["保存到", "百度网盘"]} w="w-full" />
    </Group>

    <button aria-label="折叠功能区" className="mt-auto mr-3 mb-[6px] ml-auto">
      <svg width="16" height="9" viewBox="0 0 16 9" fill="none" stroke="#444" strokeWidth="1.300">
        <path d="M1 8l7-7 7 7" />
      </svg>
    </button>
  </div>
);

const QuickAccess = () => (
  <div className="flex h-16 shrink-0 items-center pb-4 pl-[13px]">
    <button aria-label="保存">
      <svg width="20" height="20" viewBox="0 0 20 20">
        <path d="M0 0h20v20H0z" fill="#8b5bab" />
        <path d="M2.500 1.500h15v9.500h-15zM6 14h8v5.500H6z" fill="#fff" />
        <path d="M8 15h2v4H8z" fill="#8b5bab" />
      </svg>
    </button>
    <button aria-label="撤消" className="ml-[22px]">
      <svg width="22" height="20" viewBox="0 0 22 20" fill="none" stroke="#b0b0b0" strokeWidth="3">
        <path d="M8 1L2 6.500 8 12M2 6.500h11q6.500 0 6.500 6T12 19" />
      </svg>
    </button>
    <span className="ml-[10px]"><Chevron color="#b0b0b0" /></span>
    <button aria-label="恢复" className="ml-4">
      <svg width="22" height="20" viewBox="0 0 22 20" fill="none" stroke="#b0b0b0" strokeWidth="3">
        <path d="M14 1l6 5.500-6 5.500M20 6.500H9q-6.500 0-6.500 6T10 19" />
      </svg>
    </button>
    <span className="ml-[10px]"><Chevron color="#b0b0b0" /></span>
    <button aria-label="自定义快速访问工具栏" className="ml-6">
      <svg width="8" height="8" viewBox="0 0 8 8">
        <path d="M0 0h8v1.500H0zM0 3.500h8L4 8z" fill="#444" />
      </svg>
    </button>
  </div>
);

const FormulaBar = () => {
  const [value, setValue] = useState("1");
  return (
    <div className="mb-[15px] flex h-[37px] shrink-0 items-stretch pr-2 pl-[7px] text-[#333]">
      <div className="relative w-[152px]">
        <input
          aria-label="名称框"
          defaultValue="E21"
          className="h-full w-full border border-[#c6c6c6] bg-[#fdfdfd] pl-[7px]"
        />
        <svg className="absolute top-4 right-[10px]" width="8" height="5" viewBox="0 0 8 5">
          <path d="M0 0h8L4 5z" fill="#777" />
        </svg>
      </div>
      <div className="flex w-[45px] flex-col items-center justify-center gap-1">
        <span className="size-[3px] bg-[#aaa]" />
        <span className="size-[3px] bg-[#aaa]" />
        <span className="size-[3px] bg-[#aaa]" />
      </div>
      <div className="mr-[5px] flex w-[163px] items-center border border-[#c6c6c6] bg-[#fdfdfd]">
        <button aria-label="取消" className="flex w-[54px] justify-center">
          <svg width="18" height="16" viewBox="0 0 18 16" stroke="#bdbdbd" strokeWidth="2.500">
            <path d="M1 1l16 14M17 1L1 15" />
          </svg>
        </button>
        <button aria-label="输入" className="flex w-[54px] justify-center">
          <svg width="20" height="16" viewBox="0 0 20 16" fill="none" stroke="#bdbdbd" strokeWidth="3.500">
            <path d="M1 9l5 5L19 1" />
          </svg>
        </button>
        <button
          aria-label="插入函数"
          className="w-[54px] font-['Liberation_Serif',serif] text-[24px] leading-6 font-bold text-[#666] italic"
        >
          fx
        </button>
      </div>
      <div className="relative flex-1">
        <input
          aria-label="编辑栏"
          value={value}
          onChange={(e) => setValue(e.target.value)}
          className="h-full w-full border border-[#c6c6c6] bg-[#fdfdfd] pl-4"
        />
        <svg className="absolute top-[15px] right-[6px]" width="12" height="9" viewBox="0 0 12 9" fill="none" stroke="#777" strokeWidth="3.500">
          <path d="M1 1.500l5 5 5-5" />
        </svg>
      </div>
    </div>
  );
};

const Sheet = () => (
  <div className="min-w-0 flex-1 overflow-hidden border-r border-b border-[#9c9c9c] bg-[#cce8cf]">
    <table className="w-[2181px] table-fixed border-separate border-spacing-0 font-['Liberation_Serif','Noto_Sans_CJK_SC',serif] text-[24px] leading-6 whitespace-nowrap text-black">
      <colgroup>
        <col className="w-[43px]" />
        {COLUMNS.map((col) => (
          <col key={col.id} className={col.w} />
        ))}
      </colgroup>
      <thead>
        <tr className="h-[30px] bg-[#e6e6e6]">
          <th className="border-r border-b border-[#9c9c9c] pr-1 pb-1 align-bottom">
            <svg className="ml-auto" width="22" height="22" viewBox="0 0 22 22">
              <path d="M22 0v22H0z" fill="#b4b4b4" />
            </svg>
          </th>
          {COLUMNS.map((col) => (
            <th
              key={col.id}
              scope="col"
              className={`border-r border-r-[#b8b8b8] pt-[2px] font-normal ${
                col.id === "E"
                  ? "border-b-2 border-b-[#217346] bg-[#d2d2d2] text-[#217346]"
                  : "border-b border-b-[#9c9c9c]"
              }`}
            >
              {col.id}
            </th>
          ))}
        </tr>
      </thead>
      <tbody>
        {ROWS.map((row, r) => (
          <tr key={row.n} className={row.h}>
            <th
              scope="row"
              className={`border-b border-b-[#b0b0b0] align-bottom font-normal ${
                row.n === 21
                  ? "border-r-2 border-r-[#217346] bg-[#d2d2d2] text-[#217346]"
                  : "border-r border-r-[#9c9c9c] bg-[#e6e6e6]"
              }`}
            >
              {row.n}
            </th>
            {COLUMNS.map((col, c) => {
              if (covered.has(`${r}:${c}`)) return null;
              const cell = row.cells?.[col.id];
              return (
                <td
                  key={col.id}
                  colSpan={cell?.colSpan}
                  rowSpan={cell?.rowSpan}
                  className={`border-r border-b px-[3px] ${row.n < 23 ? "pt-[2px]" : ""} ${
                    col.id === "B" && row.n === 27 ? "whitespace-normal" : ""
                  } ${cell?.cls ?? PLAIN}`}
                >
                  {cell?.v}
                </td>
              );
            })}
          </tr>
        ))}
      </tbody>
    </table>
  </div>
);

const ScrollArrow = ({ label, d, cls }: { label: string; d: string; cls: string }) => (
  <button
    aria-label={label}
    className={`flex size-6 shrink-0 items-center justify-center border border-[#777] bg-white ${cls}`}
  >
    <svg width="12" height="12" viewBox="0 0 12 12" fill="#666">
      <path d={d} />
    </svg>
  </button>
);

const VerticalScroll = () => (
  <div className="mr-1 ml-[2px] flex w-6 shrink-0 flex-col bg-[#dadada] pt-px">
    <ScrollArrow label="向上滚动" d="M0 9h12L6 3z" cls="" />
    <div className="h-[28%] border border-[#777] bg-white" />
    <ScrollArrow label="向下滚动" d="M1 3h10L6 9z" cls="mt-auto" />
  </div>
);

const SheetTabs = () => (
  <div className="flex h-8 shrink-0 items-start text-[20px] text-[#444]">
    <div className="flex h-8 w-[115px] items-center gap-7 pl-7">
      <svg width="7" height="12" viewBox="0 0 7 12" fill="#c0c0c0"><path d="M7 0v12L0 6z" /></svg>
      <svg width="7" height="12" viewBox="0 0 7 12" fill="#c0c0c0"><path d="M0 0v12l7-6z" /></svg>
    </div>
    <button className="relative -mt-px h-[30px] w-[94px] border-x border-b-2 border-x-[#9c9c9c] border-b-[#217346] bg-white pb-1 leading-6 text-[#217346]">
      Sheet1
    </button>
    <button className="h-[29px] w-[92px] pb-[6px] leading-[23px]">Sheet2</button>
    <span className="mt-1 h-[25px] w-px bg-[#9c9c9c]" />
    <button className="h-[29px] w-[91px] pb-[6px] leading-[23px]">Sheet3</button>
    <span className="mt-1 h-[25px] w-px bg-[#9c9c9c]" />
    <button aria-label="新工作表" className="mt-1 ml-[37px]">
      <svg width="24" height="24" viewBox="0 0 24 24" fill="none" stroke="#777">
        <circle cx="12" cy="12" r="10.500" strokeWidth="1.300" />
        <path d="M7 12h10M12 7v10" strokeWidth="1.800" />
      </svg>
    </button>
    <div className="ml-auto flex w-[869px] items-center pt-[3px] pr-[29px]">
      <div className="mr-[17px] flex flex-col gap-[3px]">
        <span className="size-[3px] bg-[#aaa]" />
        <span className="size-[3px] bg-[#aaa]" />
        <span className="size-[3px] bg-[#aaa]" />
      </div>
      <div className="flex flex-1 bg-[#dadada]">
        <ScrollArrow label="向左滚动" d="M9 0v12L3 6z" cls="" />
        <div className="h-6 w-[732px] border border-l-0 border-[#777] bg-white" />
        <ScrollArrow label="向右滚动" d="M3 0v12l6-6z" cls="ml-auto" />
      </div>
    </div>
  </div>
);

const StatusBar = () => (
  <footer className="relative flex h-[34px] shrink-0 items-center border-t border-[#c6c6c6] bg-[#f3f3f3] pb-[2px] text-[#333]">
    <span className="pl-[10px]">就绪</span>
    <button className="ml-[29px] flex items-center gap-[2px]">
      <svg width="22" height="22" viewBox="0 0 22 22" fill="none" stroke="#444" strokeWidth="1.600">
        <path d="M8 2Q1 5 2 12t8 8" strokeDasharray="5 1.500" />
        <path d="M10 1v9H6l3 3M12 3q4 .5 5.500 3.500" />
        <path d="M13 12q1-3 4-2.500 4 1 2.500 4-2.500 2-2.500 4M17 20v2" strokeWidth="2.400" />
      </svg>
      辅助功能: 不可用
    </button>
    <div className="ml-auto flex h-full items-center">
      <button aria-label="普通" className="flex h-full w-[60px] items-center justify-center bg-[#c6c6c6]">
        <svg width="20" height="19" viewBox="0 0 20 19" fill="none" stroke="#666">
          <path d="M.5.5h18v17H.5zM.5 6.500h18M.5 12.500h18M6.500.5v17M12.500.5v17" />
        </svg>
      </button>
      <button aria-label="页面布局" className="flex h-full w-[60px] items-center justify-center">
        <svg width="20" height="19" viewBox="0 0 20 19" fill="none" stroke="#666">
          <path d="M.5.5h18v17H.5zM4.500 3.500h10v12h-10zM7 6.500h5M7 9.500h5M7 12.500h5" />
        </svg>
      </button>
      <button aria-label="分页预览" className="flex h-full w-[60px] items-center justify-center">
        <svg width="20" height="19" viewBox="0 0 20 19" fill="none" stroke="#666">
          <path d="M.5.5h18v17H.5zM.5 10.500h12V.5M6.500.5v10" />
        </svg>
      </button>
      <button aria-label="缩小" className="ml-2 flex h-full w-5 items-center">
        <span className="h-[2px] w-3 bg-[#333]" />
      </button>
      <input
        type="range"
        aria-label="显示比例"
        defaultValue={48}
        className="h-5 w-[152px] appearance-none bg-transparent [&::-webkit-slider-runnable-track]:h-[2px] [&::-webkit-slider-runnable-track]:bg-[#222] [&::-webkit-slider-thumb]:-mt-2 [&::-webkit-slider-thumb]:h-[18px] [&::-webkit-slider-thumb]:w-2 [&::-webkit-slider-thumb]:appearance-none [&::-webkit-slider-thumb]:bg-[#666]"
      />
      <button aria-label="放大" className="ml-1 flex h-full w-5 items-center">
        <svg width="11" height="11" viewBox="0 0 11 11" stroke="#333" strokeWidth="1.500">
          <path d="M0 5.500h11M5.500 0v11" />
        </svg>
      </button>
      <span className="w-[70px] pr-3 text-right">100%</span>
    </div>
    <span className="pointer-events-none absolute top-[2px] right-4 text-[19px] leading-6 text-[#777]/80">
      CSDN @工控老马
    </span>
  </footer>
);

const App = () => (
  <main className="flex h-screen flex-col overflow-hidden bg-[#e6e6e6] font-['Open_Sans','Noto_Sans_CJK_SC',sans-serif] text-[18px]">
    <header className="relative shrink-0 bg-[#217346]">
      <HeaderArt />
      <TitleBar />
      <TabBar />
    </header>
    <Ribbon />
    <QuickAccess />
    <FormulaBar />
    <div className="relative flex min-h-0 flex-1">
      <Sheet />
      <VerticalScroll />
      {/* level meter docked at the screen edge */}
      <div className="absolute top-[459px] left-0 flex h-[89px] w-4 flex-col justify-end rounded-r-md border border-[#2d3140] bg-[#4a4f60] pb-[9px] pl-[2px]">
        <div className="h-10 w-[7px] bg-[repeating-linear-gradient(#2f3342_0_2px,#5a5f70_2px_3px)]" />
        <div className="h-7 w-[7px] bg-[repeating-linear-gradient(transparent_0_2px,#4a4f60_2px_3px),linear-gradient(#b5d468,#3cc8c8)]" />
      </div>
    </div>
    <SheetTabs />
    <StatusBar />
  </main>
);

export default App;
